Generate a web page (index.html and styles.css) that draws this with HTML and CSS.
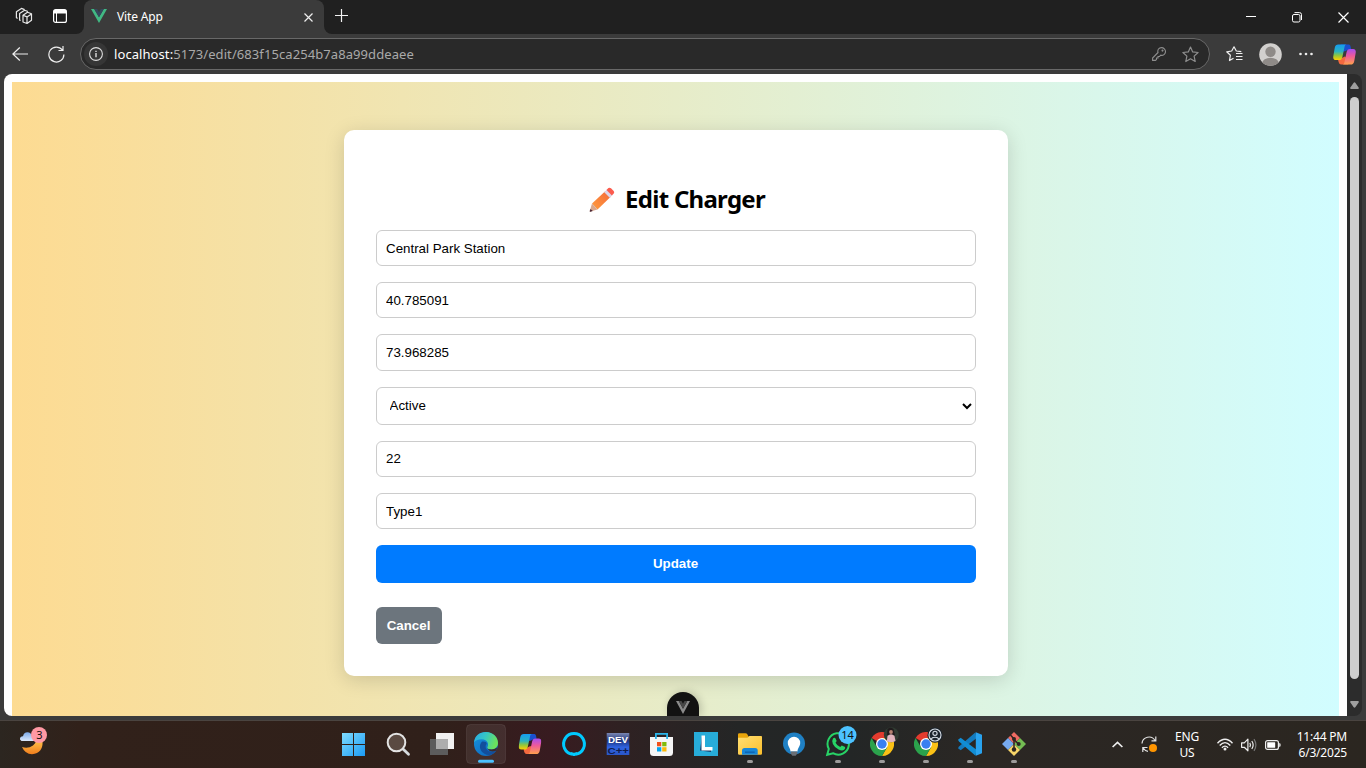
FILE: index.html
```html
<!DOCTYPE html>
<html lang="en">
<head>
<meta charset="utf-8">
<title>Vite App</title>
<link rel="stylesheet" href="styles.css">
</head>
<body>
<svg class="defs" aria-hidden="true">
  <defs>
    <linearGradient id="cpA" x1="0" y1="0" x2="0" y2="1"><stop offset="0" stop-color="#159cf0"/><stop offset=".45" stop-color="#2bb3c0"/><stop offset=".7" stop-color="#8fc63f"/><stop offset="1" stop-color="#ffd000"/></linearGradient>
    <linearGradient id="cpB" x1="0" y1="0" x2="0" y2="1"><stop offset="0" stop-color="#a64df0"/><stop offset=".45" stop-color="#ee5a9a"/><stop offset="1" stop-color="#ffa04d"/></linearGradient>
    <linearGradient id="win" x1="0" y1="0" x2="1" y2="1"><stop offset="0" stop-color="#7fdcff"/><stop offset="1" stop-color="#1b9bf5"/></linearGradient>
    <linearGradient id="edgeG" x1="0" y1="0" x2="1" y2=".3"><stop offset="0" stop-color="#28a9e8"/><stop offset=".5" stop-color="#35c6c5"/><stop offset="1" stop-color="#6be25c"/></linearGradient>
    <linearGradient id="edgeB" x1="0" y1="0" x2="1" y2="1"><stop offset="0" stop-color="#1795df"/><stop offset="1" stop-color="#0b5fb8"/></linearGradient>
    <linearGradient id="moon" x1="0" y1="0" x2="0" y2="1"><stop offset="0" stop-color="#ffc04a"/><stop offset="1" stop-color="#f07d1c"/></linearGradient>
    <linearGradient id="cloud" x1="0" y1="0" x2="0" y2="1"><stop offset="0" stop-color="#7ba9ea"/><stop offset="1" stop-color="#dbe8fb"/></linearGradient>
    <linearGradient id="dev" x1="0" y1="0" x2="0" y2="1"><stop offset="0" stop-color="#7a86b0"/><stop offset=".35" stop-color="#20357f"/><stop offset=".65" stop-color="#2f62e0"/><stop offset="1" stop-color="#2a56c8"/></linearGradient>
    <linearGradient id="fold" x1="0" y1="0" x2="1" y2="1"><stop offset="0" stop-color="#ffdf74"/><stop offset="1" stop-color="#fbbf2c"/></linearGradient>
    <linearGradient id="pen" x1="0" y1="1" x2="1" y2="0"><stop offset="0" stop-color="#ff9c3c"/><stop offset="1" stop-color="#f4683c"/></linearGradient>
    <symbol id="copilot" viewBox="0 0 24 22">
      <path d="M8 .5h8.500c1.400 0 1.900 1.300 2.400 4.700l-3.700 1-2.700 1.500L9 8z" fill="#1a4fce"/>
      <path d="M16 21.500H8.500c-1.800 0-2.500-1.500-3.200-4.800l4-2 3-1.500 2 1.500z" fill="#f4693f"/>
      <path d="M5.500.5h8.700c-1.500 0-1.900 1.200-2.300 3.200l-2 9.300c-.6 2.700-1.400 3.800-3.600 3.800H3c-2.300 0-3.200-1.700-2.700-4.300L1.800 4C2.300 1.600 3.500.5 5.500.5z" fill="url(#cpA)"/>
      <path d="M18.500 21.500H9.800c1.500 0 1.900-1.200 2.300-3.200l2-9.300c.6-2.700 1.400-3.800 3.600-3.800H21c2.300 0 3.200 1.700 2.700 4.300L22.200 18c-.5 2.400-1.700 3.500-3.700 3.500z" fill="url(#cpB)"/>
    </symbol>
    <symbol id="chrome" viewBox="0 0 24 24">
      <path d="M12 12 1.600 6A12 12 0 0 1 22.400 6H12z" fill="#e33b2e"/>
      <path d="M12 12V6h10.400A12 12 0 0 1 12 24l5.200-9z" fill="#fbc116"/>
      <path d="M12 12l5.200 3L12 24A12 12 0 0 1 1.600 6l5.200 9z" fill="#2ba24c"/>
      <circle cx="12" cy="12" r="6" fill="#fff"/><circle cx="12" cy="12" r="4.700" fill="#3a7ff0"/>
    </symbol>
  </defs>
</svg>
<div class="screen">
  <header class="tabstrip">
    <div class="strip-tools">
      <svg width="18" height="18" viewBox="0 0 18 18" fill="none" stroke="#e8e8e8" stroke-width="1.200" stroke-linejoin="round"><path d="M8 8.300l4.500-3 4 1.500v6.400l-4.500 3.300-4-1.500zM8 8.300l4 1.600v6.400M12 9.900l4.500-3"/><path d="M5.600 13.500l-1-.4V6.400l5-3.200 3.400 1.300M2.600 11.400l-1.200-.6V4.700l5-3.300L9.600 2.600"/></svg>
      <svg width="14" height="14" viewBox="0 0 14 14"><rect x=".6" y=".6" width="12.800" height="12.800" rx="2" fill="none" stroke="#fff" stroke-width="1.200"/><path d="M1 1h12v3.500H1z" fill="#fff"/><path d="M3.500 4v9" stroke="#fff"/></svg>
    </div>
    <div class="tab">
      <svg width="16" height="14" viewBox="0 0 16 14"><path d="M0 0h3.200L8 8.300 12.800 0H16L8 13.900z" fill="#41b883"/><path d="M3.200 0h2.900L8 3.300 9.900 0h2.900L8 8.300z" fill="#35495e"/></svg>
      <span class="tab-title">Vite App</span>
      <svg class="tab-close" width="9" height="9" viewBox="0 0 9 9"><path d="M.5.5l8 8M8.500.5l-8 8" stroke="#eee" stroke-width="1.200"/></svg>
    </div>
    <div class="strip-rest">
      <svg class="plus" width="14" height="14" viewBox="0 0 14 14"><path d="M0 6.500h13M6.500 0v13" stroke="#f2f2f2" stroke-width="1.200"/></svg>
      <div class="win-buttons">
        <svg width="10" height="11" viewBox="0 0 10 11"><path d="M0 4.500h10" stroke="#fff"/></svg>
        <svg width="10" height="11" viewBox="0 0 10 11" fill="none" stroke="#fff"><rect x=".5" y="2.500" width="7.500" height="7.500" rx="1.500"/><path d="M2.500.600H7.500Q9.500.600 9.500 2.600V8"/></svg>
        <svg width="11" height="11" viewBox="0 0 11 11"><path d="M.5.5l10 10M10.500.5l-10 10" stroke="#fff" stroke-width="1.200"/></svg>
      </div>
    </div>
  </header>

  <div class="toolbar">
    <svg class="nav-back" width="17" height="15" viewBox="0 0 17 15" fill="none" stroke="#eee" stroke-width="1.200"><path d="M16 7H1M7.800.500L.9 7l6.900 6.500"/></svg>
    <svg class="nav-reload" width="17" height="17" viewBox="0 0 17 17" fill="none" stroke="#eee" stroke-width="1.200"><path d="M15.900 8.500A7.500 7.500 0 1 1 14.300 3.900M15 0v4.500h-4.500"/></svg>
    <div class="address">
      <span class="site-info"><svg width="14" height="14" viewBox="0 0 14 14"><circle cx="7" cy="7" r="6.400" fill="none" stroke="#ddd" stroke-width="1.100"/><path d="M6.300 6h1.400v4.200H6.300zM6.300 3.700h1.400v1.400H6.300z" fill="#ddd"/></svg></span>
      <span class="url"><b>localhost:</b>5173/edit/683f15ca254b7a8a99ddeaee</span>
      <svg class="key" width="14" height="14" viewBox="0 0 14 14" fill="none" stroke="#8e8e8e" stroke-width="1.100"><path d="M6 5.500C5.200 2.800 7 .6 9.500.6a4 4 0 0 1 4 4c0 2.500-2.300 4.300-4.900 3.600L7.500 9.500H6V11H4.500v1.500L3.500 13.400H.6V11z"/><circle cx="10.500" cy="3.600" r=".5"/></svg>
      <svg class="star" width="17" height="17" viewBox="0 0 17 17" fill="none" stroke="#8e8e8e" stroke-width="1.200" stroke-linejoin="round"><path d="M8.500 1l2.200 4.900 5.400.6-4 3.600 1.100 5.400-4.700-2.700-4.700 2.700 1.100-5.400-4-3.600 5.400-.6z"/></svg>
    </div>
    <svg class="favs" width="17" height="16" viewBox="0 0 17 16" fill="none" stroke="#eee" stroke-width="1.200" stroke-linejoin="round"><path d="M7.500 12.300l-4 2.200.9-5.300L.7 5.800l5-.8L8 .8 10.300 5l5 .7"/><path d="M10 7.500H16.500M10 10.500H16.500M10 13.500H16.500"/></svg>
    <svg class="profile" width="23" height="23" viewBox="0 0 23 23"><defs><clipPath id="pc"><circle cx="11.500" cy="11.500" r="11.300"/></clipPath></defs><g clip-path="url(#pc)"><path d="M0 0h23v23H0z" fill="#d2d0ce"/><circle cx="11.500" cy="8.700" r="5.200" fill="#8f8b88"/><ellipse cx="11.500" cy="20" rx="8.200" ry="5.200" fill="#8f8b88"/></g></svg>
    <svg class="more" width="14" height="4" viewBox="0 0 14 4" fill="#eee"><circle cx="1.500" cy="2" r="1.300"/><circle cx="7" cy="2" r="1.300"/><circle cx="12.500" cy="2" r="1.300"/></svg>
    <svg class="copilot-btn" width="23" height="21"><use href="#copilot"/></svg>
  </div>

  <div class="browser-body">
    <div class="page">
      <main class="gradient">
        <section class="card">
          <h2><svg width="26" height="26" viewBox="0 0 26 26"><path d="M3 16.500L16.500 4l5.500 5.500L8.500 22.500z" fill="url(#pen)"/><path d="M15.200 5.200l3-2.900 5.600 5.500-3 3z" fill="#dcd5ea"/><path d="M17.500 2.900l1.900-1.800q1.400-.9 2.600.2l2.700 2.800q1.100 1.200 0 2.500l-1.800 1.900z" fill="#fb5b4d"/><path d="M3 16.500l5.500 6L1.500 24.600Q.6 24.800.8 24z" fill="#d9a78c"/><path d="M1.500 22l2.300 2-2.300.8Q.5 25 .7 24z" fill="#4b2838"/></svg><span>Edit Charger</span></h2>
          <form class="form">
            <input class="field" type="text" value="Central Park Station">
            <input class="field" type="text" value="40.785091">
            <input class="field field-tall" type="text" value="73.968285">
            <select class="field field-select"><option>Active</option></select>
            <input class="field field-raised" type="text" value="22">
            <input class="field" type="text" value="Type1">
            <button class="btn btn-update" type="button">Update</button>
          </form>
          <button class="btn btn-cancel" type="button">Cancel</button>
        </section>
      </main>
      <div class="devtools"><svg width="14" height="13" viewBox="0 0 14 13"><path d="M0 0h2.800L7 7.700 11.200 0H14L7 13z" fill="#8b8b8b"/><path d="M2.800 0h2.700L7 2.800 8.500 0h2.700L7 7.700z" fill="#484848"/></svg></div>
    </div>
    <div class="scrollbar">
      <svg width="9" height="7" viewBox="0 0 9 7"><path d="M3.500 1q1-1.500 2 0L8.800 5.700Q9 7 8 7H1Q0 7 .2 5.700z" fill="#9f9f9f"/></svg>
      <div class="thumb"></div>
      <svg width="9" height="7" viewBox="0 0 9 7"><path d="M3.500 6q1 1.500 2 0L8.800 1.300Q9 0 8 0H1Q0 0 .2 1.300z" fill="#9f9f9f"/></svg>
    </div>
  </div>

  <footer class="taskbar">
    <svg class="weather" width="48" height="47" viewBox="0 0 48 47"><path d="M22 26q6 2 11-1.500 3-2.500 3-4.500h6.500q1 12-10.500 13.300Q25 33 22 26z" fill="url(#moon)"/><path d="M21.500 20q-2-.8-1.500-3 .8-2 3-1.800.8-4 4.500-4 3.500.2 4.500 4Q36 15 36 20z" fill="url(#cloud)"/><circle cx="39" cy="14" r="8" fill="#ff99a4"/><text x="39.500" y="18" class="badge-text" text-anchor="middle">3</text></svg>
    <nav class="apps">
      <svg viewBox="0 0 44 47"><path d="M10 12h11v11H10zM22 12h11v11H22zM10 24h11v11H10zM22 24h11v11H22z" fill="url(#win)"/></svg>
      <svg viewBox="0 0 44 47"><path d="M27 28l5.500 5.300" stroke="#d5dade" stroke-width="2.800" stroke-linecap="round"/><circle cx="20.500" cy="21.500" r="8.800" fill="#5a4a42" stroke="#e3e3e3" stroke-width="2"/></svg>
      <svg viewBox="0 0 44 47"><path d="M16 12h18v16H16z" fill="#f1f1f1"/><path d="M10 18h18v16H10z" fill="#5c5c5c"/><path d="M16 18h12v10H16z" fill="#adadad"/></svg>
      <svg viewBox="0 0 44 47"><rect x="2.500" y="3.500" width="39" height="39" rx="4" fill="#fff" fill-opacity=".08" stroke="#fff" stroke-opacity=".08"/><circle cx="22" cy="23" r="12" fill="url(#edgeB)"/><path d="M10 21.500C10.500 15 15.500 11 22 11c7 0 12 5.200 12 11 0 4-3 6.500-6.700 6.500-3 0-4.500-1.200-4-2.200C25 24 24.300 18.300 17.500 18.300c-3.200 0-6 1.200-7.500 3.200z" fill="url(#edgeG)"/><path d="M18 20.500c-3.500 3.500-2.500 9.500 2.500 12.300 4 2.200 8.500 1.500 12-3-4.500 2.200-9 .7-10.500-2.300-.8-2-.2-3.500.7-4.700Q22.500 20 18 20.500z" fill="#124e9c"/><path d="M23.300 26q-.3 2.500 4 2.500 3.500 0 5.700-2l-.5 3q-3.500 1.500-6.700.5-2.700-1.200-2.500-4z" fill="#3b2a2c"/><rect x="14" y="38.800" width="16" height="3" rx="1.500" fill="#4cc2ff"/></svg>
      <svg viewBox="0 0 44 47"><use href="#copilot" x="10.500" y="12.500" width="23" height="21"/></svg>
      <svg viewBox="0 0 44 47"><path d="M20.500 33.300A10.400 10.400 0 1 1 23.500 33.300" fill="none" stroke="#00caff" stroke-width="3"/><path d="M18.700 31q3.200 1.300 6.600 0l-2 4h-2.600z" fill="#00caff"/></svg>
      <svg viewBox="0 0 44 47"><path d="M10.700 12h22.600v22H10.700z" fill="url(#dev)"/><text x="12" y="22" class="dev-top" textLength="20" lengthAdjust="spacingAndGlyphs">DEV</text><text x="11.500" y="33.300" class="dev-bottom" textLength="21.500" lengthAdjust="spacingAndGlyphs">C++</text></svg>
      <svg viewBox="0 0 44 47"><path d="M10 16h23v15.500q0 3.500-3.500 3.500h-16q-3.500 0-3.500-3.500z" fill="#f5f5f5"/><path d="M15.900 18v-5.100h11.200V18" fill="none" stroke="#2bb5ea" stroke-width="1.800"/><path d="M17 21h4.300v4.300H17z" fill="#f1511b"/><path d="M22.200 21h4.300v4.300h-4.300z" fill="#80bb08"/><path d="M17 26.200h4.300v4.300H17z" fill="#00a4ef"/><path d="M22.200 26.200h4.300v4.300h-4.300z" fill="#fbb908"/></svg>
      <svg viewBox="0 0 44 47"><path d="M10 11h24v24H10z" fill="#27acd9"/><path d="M18 15l-2 14.500 11 1.500v-3l-8-2z" fill="#173c6b"/><path d="M17.500 14.500H21V26h7.500v3.500H17.500z" fill="#fff"/></svg>
      <svg viewBox="0 0 44 47"><path d="M10 13.500q0-1.200 1.200-1.200h6.300q1.200 0 1.800 1l1.200 2.200H33q1 0 1 1V20H10z" fill="#e9a50b"/><path d="M10 16.800h8.500q1 0 1.600-.6l1.400-1.200H33q1 0 1 1v16.500q0 1.200-1.200 1.200H11.200Q10 33.700 10 32.500z" fill="url(#fold)"/><path d="M14 33.700v-4.200q0-2.500 2.500-2.500h10.700q2.500 0 2.500 2.500v4.200z" fill="#1787d8"/><path d="M17 30.500h9.700v1.300H17z" fill="#0c60ad"/><rect class="run" x="19" y="39" width="6" height="3" rx="1.500"/></svg>
      <svg viewBox="0 0 44 47"><circle cx="22" cy="22.500" r="11" fill="#1f80c4"/><path d="M22 15.700a6.200 6.200 0 0 1 6.200 6.200c0 3.700-2.700 4.700-2.700 8.600h-7c0-3.900-2.700-4.900-2.700-8.600A6.200 6.200 0 0 1 22 15.700z" fill="#fff"/><path d="M18.700 30.500h6.600v1.800l-1.600 2.500h-3.400l-1.600-2.500z" fill="#696e75"/></svg>
      <svg viewBox="0 0 44 47"><path d="M11.200 33.800l1.600-5.900A10.700 10.700 0 1 1 17 32.200z" fill="none" stroke="#27d366" stroke-width="2"/><path d="M17 17.500q1-1.300 2.200-.6l1.500 3.200-1.200 1.700q1.700 3.200 4.700 4.300l1.600-1.700 3.300 1.600q.5 1.500-1 2.800-2 1.500-5.500-.3-4-2-5.700-5.600-1.400-3.200.1-5.400z" fill="#27d366"/><circle cx="31.500" cy="14" r="9" fill="#4cc2ff"/><text x="31.500" y="18" class="badge-text" text-anchor="middle">14</text><rect class="run" x="19" y="39" width="6" height="3" rx="1.500"/></svg>
      <svg viewBox="0 0 44 47"><use href="#chrome" x="10" y="11" width="24" height="24"/><circle cx="31.300" cy="13.800" r="7.500" fill="#303b32"/><path d="M27.500 8q3-2.500 6 0l1.500 6h-8z" fill="#211b1d"/><circle cx="31" cy="11" r="1.900" fill="#b78373"/><path d="M26.800 20.300l.7-5.300q3.500-3.400 7 0l1 5q-4.200 2.500-8.700.3z" fill="#e2b4bd"/><rect class="run" x="19" y="39" width="6" height="3" rx="1.500"/></svg>
      <svg viewBox="0 0 44 47"><use href="#chrome" x="10" y="11" width="24" height="24"/><circle cx="31" cy="14.200" r="7.600" fill="#1c242d"/><g fill="none" stroke="#d7dee6" stroke-width="1.100"><circle cx="31" cy="14" r="6"/><circle cx="31" cy="12.300" r="2.100"/><path d="M27 18.300q1-2 4-2t4 2"/></g><rect class="run" x="19" y="39" width="6" height="3" rx="1.500"/></svg>
      <svg viewBox="0 0 44 47"><path d="M28.500 17.300L12.700 29.200 10 27.200l1-1.700L27.500 11.200z" fill="#137bbf"/><path d="M28.500 28.700L12.700 16.800 10 18.800l1 1.700 16.500 14.300z" fill="#118dd4"/><path d="M27.800 11.200L34 13.800v18.400l-6.200 2.600z" fill="#29a3ef"/><rect class="run" x="19" y="39" width="6" height="3" rx="1.500"/></svg>
      <svg viewBox="0 0 44 47"><path d="M22 11l6 6-6 6-6-6z" fill="#ee6a62"/><path d="M28 17l6 6-6 6-6-6z" fill="#74bd53"/><path d="M16 17l6 6-6 6-6-6z" fill="#76aaf0"/><path d="M22 23l6 6-6 6-6-6z" fill="#f8d568"/><path d="M18.500 14l3.500 4v11M22 18.500l4.500 4.500" fill="none" stroke="#2c2522" stroke-width="1.500"/><g fill="#2c2522"><circle cx="22" cy="18" r="2"/><circle cx="26.700" cy="23" r="2"/><circle cx="22" cy="28.500" r="2.200"/></g><rect class="run" x="19" y="39" width="6" height="3" rx="1.500"/></svg>
    </nav>
    <div class="tray">
      <svg class="t-chevron" width="11" height="7" viewBox="0 0 11 7"><path d="M.6 6l4.900-4.600L10.400 6" fill="none" stroke="#eee" stroke-width="1.700"/></svg>
      <svg class="t-sync" width="17" height="17" viewBox="0 0 17 17" fill="none" stroke="#e2e2e2" stroke-width="1.200"><path d="M1 7.500A7 7 0 0 1 14 4.500M14.800.5v4.300h-4.300M7 15.300Q4 15 2.200 12M6.500 11.500H1.800V16"/><circle cx="12" cy="12" r="4" fill="#ff9500" stroke="none"/></svg>
      <div class="lang"><span>ENG</span><span>US</span></div>
      <svg class="t-wifi" width="16" height="13" viewBox="0 0 16 13" fill="none" stroke="#eee" stroke-width="1.400"><path d="M.5 5.200Q8-2.800 15.500 5.200M2.700 7.500Q8 1.800 13.300 7.500M4.900 9.700Q8 6.500 11.100 9.700"/><circle cx="8" cy="11" r="1.500" fill="#eee" stroke="none"/></svg>
      <svg class="t-vol" width="16" height="14" viewBox="0 0 16 14" fill="none" stroke="#eee" stroke-width="1.200" stroke-linejoin="round"><path d="M.6 4.800h2.700L6.900 1.200v11.600L3.300 9.300H.6zM8.800 4.900q1.300 2.100 0 4.200M10.800 3q2.700 4 0 8"/><path d="M13 1.200q3.800 5.800 0 11.600" stroke="#777"/></svg>
      <svg class="t-bat" width="16" height="10" viewBox="0 0 16 10"><rect x=".6" y=".6" width="12.800" height="8.800" rx="2" fill="none" stroke="#eee" stroke-width="1.200"/><rect x="2.200" y="2.200" width="8" height="5.600" rx=".5" fill="#fff"/><path d="M14.200 3q1.500 0 1.500 2t-1.500 2z" fill="#eee"/></svg>
      <div class="clock"><span>11:44 PM</span><span>6/3/2025</span></div>
    </div>
  </footer>
</div>
</body>
</html>
```

FILE: styles.css
```css
* { box-sizing: border-box; }
html, body { margin: 0; height: 100%; overflow: hidden; }
body { font-family: "Noto Sans", "Open Sans", sans-serif; background: #3b3b3b; }
svg { display: block; flex: none; }
.defs { position: absolute; width: 0; height: 0; }
.screen { width: 1366px; height: 768px; display: flex; flex-direction: column; background: #3b3b3b; overflow: hidden; }

/* Tab strip */
.tabstrip { height: 34px; flex: none; display: flex; background: linear-gradient(#202020 50%, #3b3b3b 50%); }
.strip-tools { width: 84px; flex: none; display: flex; align-items: center; gap: 20px; padding: 0 8px 2px 15px; background: #202020; border-bottom-right-radius: 8px; }
.tab { width: 240px; flex: none; display: flex; align-items: center; padding: 0 11px 2px 7px; background: #3b3b3b; border-radius: 8px 8px 0 0; }
.tab-title { margin-left: 10px; font-size: 12px; letter-spacing: -.15px; color: #fff; flex: 1; }
.tab-close { margin-top: 2px; }
.strip-rest { flex: 1; display: flex; background: #202020; border-bottom-left-radius: 8px; }
.plus { margin: 9px 0 0 11px; }
.win-buttons { margin-left: auto; display: flex; align-items: center; gap: 36px; padding-right: 17px; }

/* Toolbar */
.toolbar { height: 40px; flex: none; display: flex; align-items: center; background: #3b3b3b; padding-left: 12px; }
.nav-reload { margin-left: 19px; margin-right: 15px; }
.address { width: 1130px; height: 32px; display: flex; align-items: center; border: 1px solid #686868; border-radius: 16px; background: #292929; padding: 0 10px 0 3px; }
.site-info { width: 24px; height: 24px; border-radius: 50%; background: #363636; display: grid; place-items: center; }
.url { margin-left: 6px; font-size: 13px; letter-spacing: .08px; color: #a9a9a9; white-space: nowrap; flex: 1; }
.url b { font-weight: 400; color: #fff; }
.star { margin-left: 16px; }
.favs { margin-left: 16px; }
.profile { margin-left: 16px; }
.more { margin-left: 17px; }
.copilot-btn { margin-left: 20px; }

/* Page viewport */
.browser-body { height: 642px; flex: none; display: flex; padding-left: 4px; }
.page { position: relative; width: 1343px; background: #fff; border-radius: 8px 0 0 8px; padding: 8px 8px 0; overflow: hidden; }
.gradient { height: 634px; padding-top: 48px; background: linear-gradient(to right, #fddb92, #d1fdff); }
.card { width: 664px; height: 546px; margin: 0 auto; padding: 32px; background: #fff; border-radius: 10px; box-shadow: 0 4px 20px rgba(0, 0, 0, .15); }
.card h2 { height: 68px; margin: 0; padding: 22px 0 0 3px; display: flex; justify-content: center; align-items: flex-start; gap: 10px; font-size: 24px; font-weight: 700; letter-spacing: -.72px; line-height: 30px; color: #000; }
.card h2 svg { margin-top: 3px; }
.form { display: flex; flex-direction: column; gap: 16px; }
.field { height: 36px; flex: none; margin: 0; padding: 0 9.5px; border: 1px solid #ccc; border-radius: 6px; background: #fff; color: #000; font: 13.333px "Liberation Sans", Arial, sans-serif; outline: none; }
.field-tall { height: 37px; }
.field-select { height: 38px; padding: 0 9px 2px; }
.field-raised { padding-bottom: 2px; }
.btn { border: 0; border-radius: 6px; color: #fff; font: bold 13.333px "Liberation Sans", Arial, sans-serif; padding: 0; }
.btn-update { height: 38px; padding-bottom: 2px; background: #007bff; }
.btn-cancel { display: block; width: 66px; height: 37px; margin-top: 24px; background: #6c757d; }
.devtools { position: absolute; left: 663px; bottom: 0; width: 32px; height: 24px; padding: 9px; border-radius: 16px 16px 0 0; background: #121212; box-shadow: 2px 0 8px rgba(0, 0, 0, .2); }
.scrollbar { width: 15px; display: flex; flex-direction: column; align-items: center; padding: 8px 0; background: #2c2c2c; border-radius: 0 8px 8px 0; }
.thumb { width: 9px; height: 582px; margin: 8px 0 22px; border-radius: 5px; background: #cdcdcd; }

/* Taskbar */
.taskbar { height: 48px; flex: none; margin-top: 4px; border-top: 1px solid #4a4440; display: flex; color: #fff; background: linear-gradient(to right, #2c2620, #31211a 80px, #30201a 440px, #381b20 550px, #2f2122 620px, #242626 740px, #232626 850px, #2b2724 980px, #2b2620 1366px); }
.weather { margin-right: 284px; }
.apps { display: flex; }
.apps svg { width: 44px; height: 47px; }
.run { fill: #9d9b9b; }
.badge-text { font: 11px "Noto Sans", sans-serif; fill: #101010; }
.dev-top { font: bold 9px "Liberation Sans", sans-serif; fill: #fff; }
.dev-bottom { font: bold 9px "Liberation Sans", sans-serif; fill: #101c4d; }
.tray { margin-left: auto; display: flex; align-items: center; padding-right: 19px; font-size: 12px; line-height: 16px; }
.t-sync { margin-left: 18px; }
.lang, .clock { display: flex; flex-direction: column; }
.lang { width: 30px; margin-left: 14px; align-items: center; letter-spacing: -.2px; }
.t-wifi { margin-left: 15px; }
.t-vol { margin-left: 8px; }
.t-bat { margin-left: 8px; }
.clock { width: 52px; margin-left: 14px; align-items: flex-end; white-space: nowrap; letter-spacing: -.2px; }
```
